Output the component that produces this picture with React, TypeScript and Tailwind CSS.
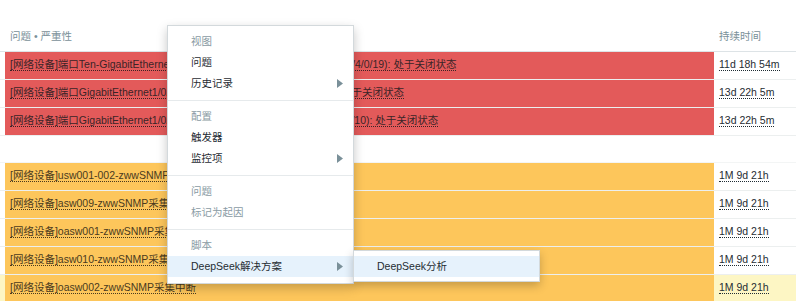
import React from "react";

const font = { fontFamily: '"Liberation Sans", Arial, "Noto Sans CJK SC", sans-serif' };

const redRows = [
  { name: "[网络设备]端口Ten-GigabitEthernet1/0/19 上联端口 (Ten-GigabitEthernet1/4/0/19): 处于关闭状态", time: "11d 18h 54m" },
  { name: "[网络设备]端口GigabitEthernet1/0/24 上联端口(GigabitEthernet1/0/24): 处于关闭状态", time: "13d 22h 5m" },
  { name: "[网络设备]端口GigabitEthernet1/0/10 核心交换上联口 (GigabitEthernet1/0/10): 处于关闭状态", time: "13d 22h 5m" },
];

const yellowRows = [
  "[网络设备]usw001-002-zwwSNMP采集中断",
  "[网络设备]asw009-zwwSNMP采集中断",
  "[网络设备]oasw001-zwwSNMP采集中断",
  "[网络设备]asw010-zwwSNMP采集中断",
  "[网络设备]oasw002-zwwSNMP采集中断",
];

const Arrow = () => (
  <svg width="6" height="9" viewBox="0 0 6 9" className="absolute right-[10px] top-[6px]">
    <polygon points="0,0 6,4.5 0,9" fill="#7a9099" />
  </svg>
);

const Item = ({ label, muted, arrow, active }: { label: string; muted?: boolean; arrow?: boolean; active?: boolean }) => (
  <li
    className={`relative h-[21px] leading-[21px] pl-[23px] ${muted ? "text-[#8a9ba4]" : "text-[#1f2c33]"} ${
      active ? "bg-[#e6f2fc]" : ""
    }`}
  >
    {label}
    {arrow && <Arrow />}
  </li>
);

export default function App() {
  return (
    <div className="relative w-[796px] h-[301px] overflow-hidden bg-white text-[10.5px]" style={font}>
      <div className="pt-[23px]">
        <table className="w-[796px] border-collapse table-fixed">
          <colgroup>
            <col className="w-[5px]" />
            <col className="w-[709px]" />
            <col className="w-[82px]" />
          </colgroup>
          <thead>
            <tr className="h-[28px] border-b border-[#dde3e6]">
              <th></th>
              <th className="text-left font-normal pl-[5px] text-[#7a9099]">问题 • 严重性</th>
              <th className="text-left font-normal pl-[5px] text-[#7a9099]">持续时间</th>
            </tr>
          </thead>
          <tbody>
            {redRows.map((r, i) => (
              <tr key={i} className="h-[28px] border-b border-[#ecefef]">
                <td></td>
                <td className="bg-[#e35a5a] pl-[5px] whitespace-nowrap overflow-hidden">
                  <span className="border-b border-dotted border-[#3a2427] text-[#3a2427]">{r.name}</span>
                </td>
                <td className="pl-[5px] whitespace-nowrap">
                  <span className="border-b border-dotted border-[#1f2c33] text-[#1f2c33]">{r.time}</span>
                </td>
              </tr>
            ))}
            <tr className="h-[27px] border-b border-[#f3f5f5]">
              <td></td>
              <td></td>
              <td></td>
            </tr>
            {yellowRows.map((n, i) => {
              const last = i === yellowRows.length - 1;
              return (
                <tr key={n} className={`h-[28px] border-b ${last ? "border-[#d6d9db] bg-[#fdf6c4]" : "border-[#ecefef]"}`}>
                  <td></td>
                  <td className="bg-[#fdc65b] pl-[5px] whitespace-nowrap overflow-hidden">
                    <span className="border-b border-dotted border-[#4a3a1e] text-[#4a3a1e]">{n}</span>
                  </td>
                  <td className="pl-[5px] whitespace-nowrap">
                    <span className="border-b border-dotted border-[#1f2c33] text-[#1f2c33]">1M 9d 21h</span>
                  </td>
                </tr>
              );
            })}
          </tbody>
        </table>
      </div>

      <div className="absolute left-[167px] top-[25px] w-[187px] bg-white border border-[#d3d9dc] shadow-[0_4px_10px_rgba(0,0,0,0.22)]">
        <ul className="pt-[5px] pb-[6px]">
          <Item label="视图" muted />
          <Item label="问题" />
          <Item label="历史记录" arrow />
        </ul>
        <ul className="pt-[5px] pb-[6px] border-t border-[#e6eaec]">
          <Item label="配置" muted />
          <Item label="触发器" />
          <Item label="监控项" arrow />
        </ul>
        <ul className="pt-[5px] pb-[6px] border-t border-[#e6eaec]">
          <Item label="问题" muted />
          <Item label="标记为起因" muted />
        </ul>
        <ul className="pt-[5px] pb-[6px] border-t border-[#e6eaec]">
          <Item label="脚本" muted />
          <Item label="DeepSeek解决方案" arrow active />
        </ul>
      </div>

      <div className="absolute left-[353px] top-[250px] w-[187px] bg-white border border-[#d3d9dc] shadow-[0_4px_10px_rgba(0,0,0,0.22)]">
        <ul className="pt-[5px] pb-[4px]">
          <Item label="DeepSeek分析" active />
        </ul>
      </div>
    </div>
  );
}
